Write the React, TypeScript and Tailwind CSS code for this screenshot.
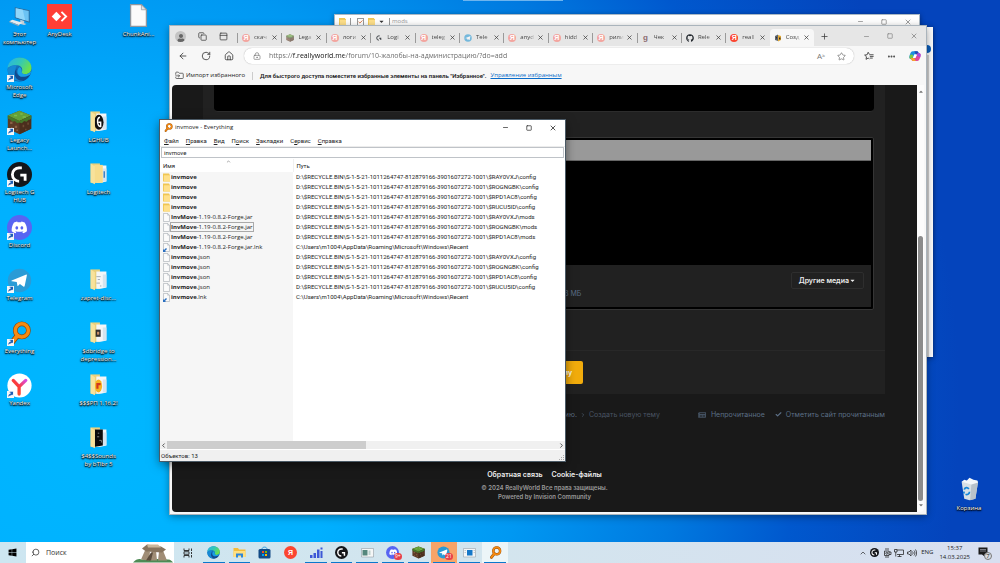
import type { ReactNode } from 'react'
import {
  ArrowLeft, RotateCw, House, LockKeyhole, Star, Ellipsis, Plus, X, Minus, Square, Search, ChevronUp,
  ChevronLeft, ChevronRight, Check, PanelTop, FolderInput, Copy,
} from 'lucide-react'
import { FaDiscord, FaGithub, FaWindows, FaUser, FaCaretDown, FaNewspaper } from 'react-icons/fa'

/* ---------- logos ---------- */

const box = 'block h-full w-full'

const Shortcut = () => (
  <svg viewBox="0 0 10 10" className="absolute bottom-0 left-0 h-[7px] w-[7px]">
    <rect width="10" height="10" fill="#f4f6f8" />
    <path d="M2 8.6C1.8 5.6 3 4.2 5.2 4V2.2h-1.4V1H8.6v5L7.4 5 6 6C4 6 3 7 2 8.6Z" fill="#1d5fb4" />
  </svg>
)

const EdgeLogo = () => (
  <svg viewBox="0 0 48 48" className={box}>
    <defs>
      <linearGradient id="eg" x1="0" y1="0" x2="1" y2="0.5">
        <stop offset="0" stopColor="#27b3e8" /><stop offset=".55" stopColor="#35c9b3" /><stop offset="1" stopColor="#6be04c" />
      </linearGradient>
      <linearGradient id="eb" x1="0" y1="0" x2="0.6" y2="1">
        <stop offset="0" stopColor="#1a8fd8" /><stop offset="1" stopColor="#0f4f98" />
      </linearGradient>
    </defs>
    <circle cx="24" cy="24" r="23" fill="url(#eb)" />
    <path d="M1 22C2 9 12 1 24 1c13 0 23 9 23 20 0 8-6 12-12 12-5 0-8-2-7-4 3-4 1-12-8-13C11 15 3 18 1 22Z" fill="url(#eg)" />
    <path d="M16 27c-1 9 5 17 15 18-14 4-29-5-30-21 3-6 12-9 18-8-2 3-3 7-3 11Z" fill="#1688d4" />
    <path d="M19 22c-4 8 2 16 11 16 6 0 11-2 14-4-4 8-12 12-19 11-10-2-14-16-6-23Z" fill="#134a8c" />
    <path d="M24 19c4 2 5 7 4 10 0 3 4 4 7 4 4 0 9-2 12-6-1 3-2 6-3 7-5 3-10 4-14 4-9 0-14-11-6-19Z" fill="#1aa6ec" fillOpacity=".9" />
  </svg>
)

const MagnifierLogo = () => (
  <svg viewBox="0 0 32 32" className={box}>
    <g fill="none" stroke="#8b4708" strokeLinecap="round"><circle cx="19" cy="12" r="8.4" strokeWidth="6" /><path d="M13 19 6 28" strokeWidth="7" /></g>
    <g fill="none" stroke="#f58a12" strokeLinecap="round"><circle cx="19" cy="12" r="8.4" strokeWidth="4.4" /><path d="M13 19 6 28" strokeWidth="5" /></g>
  </svg>
)

const GrassBlock = () => (
  <svg viewBox="0 0 32 32" className={box}>
    <path d="M16 1 31 7v17l-15 7L1 24V7Z" fill="#5c3b26" />
    <path d="M16 1 31 7l-15 7L1 7Z" fill="#63a03a" />
    <path d="M16 14 31 7v17l-15 7Z" fill="#4a2e1d" />
    <path d="m1 7 15 7 15-7v4l-3 2v-1l-3 3-3-1-3 3-3-1-3 1-3-3-3 1-3-3-3-1Z" fill="#44782a" />
    <path d="M4 15h3v3H4zM10 20h3v3h-3zM5 22h2v2H5zM12 25h2v2h-2z" fill="#8a6247" />
    <path d="M20 19h2v3h-2zM26 16h2v3h-2zM23 24h2v2h-2z" fill="#6d4a33" />
    <path d="M9 6h4v2H9zM17 4h3v2h-3zM20 8h4v2h-4z" fill="#7dbb4e" />
  </svg>
)

const GLogo = ({ plain = false }: { plain?: boolean }) => (
  <svg viewBox="0 0 32 32" className={box}>
    {!plain && <circle cx="16" cy="16" r="16" fill="#14161a" />}
    <path d="M15.5 7.5a8.6 8.6 0 0 0 0 17.2" fill="none" stroke={plain ? '#30343a' : '#fff'} strokeWidth="3.6" />
    <path d="M17 15h8v9h-3.6v-5.5H17Z" fill={plain ? '#30343a' : '#fff'} />
    <path d="M15 5.7h4v3.6h-4z" fill={plain ? '#30343a' : '#fff'} />
  </svg>
)

const DiscordLogo = () => (
  <span className="flex h-full w-full items-center justify-center rounded-full bg-[#5865f2] text-white">
    <FaDiscord className="h-2/3 w-2/3" />
  </span>
)

const TelegramLogo = () => (
  <svg viewBox="0 0 32 32" className={box}>
    <circle cx="16" cy="16" r="15" fill="#2a9bd6" />
    <path d="M6 16 24 8.5c1-.4 1.6.2 1.4 1.2L22.6 23c-.2 1-.9 1.2-1.7.7L16.5 20.5l-2.2 2.2c-.6.5-.9.3-1-.4l-.8-4.3L6.400 17c-.8-.2-.9-.7-.4-1Z" fill="#fff" />
  </svg>
)

const YandexBrowserLogo = () => (
  <svg viewBox="0 0 32 32" className={box}>
    <defs>
      <linearGradient id="yb" x1="0" y1="1" x2="1" y2="0">
        <stop offset="0" stopColor="#ff5a1f" /><stop offset=".5" stopColor="#fb3b3b" /><stop offset="1" stopColor="#d94be0" />
      </linearGradient>
    </defs>
    <circle cx="16" cy="16" r="15.5" fill="#fff" />
    <path d="M8 9.5 15.5 17.5 24 9.5M15.5 17.5V27" fill="none" stroke="url(#yb)" strokeWidth="4.2" strokeLinecap="round" />
  </svg>
)

const YaLogo = ({ faded = false }: { faded?: boolean }) => (
  <span className={`flex h-full w-full items-center justify-center rounded-full font-['Liberation_Sans',sans-serif] text-[7px] leading-none font-bold text-white ${faded ? 'bg-[#f3a59f]' : 'bg-[#fb4530]'}`}>
    Я
  </span>
)

const AnyDeskLogo = () => (
  <svg viewBox="0 0 32 32" className={box}>
    <rect width="32" height="32" fill="#ff3e36" />
    <path d="m12 10 6 6-6 6-6-6Z" fill="#fff" />
    <path d="m18.5 10 6 6-6 6" fill="none" stroke="#fff" strokeWidth="2.4" />
  </svg>
)

const PcLogo = () => (
  <svg viewBox="0 0 32 32" className={box}>
    <path d="m10 4 19 4v16L10 18Z" fill="#2e6d9e" />
    <path d="m11.2 5.500 16.600 3.500v13.400L11.200 17Z" fill="#6cc3f4" />
    <path d="m11.2 5.500 9 1.900 3 13.500-12-3.900Z" fill="#90d6fa" />
    <path d="m17 20 5 1.600v3l3 1-3 1.400-7-2 2-1.200Z" fill="#c4ccd4" />
    <path d="m3 22 4-2 13 4-5 3Z" fill="#e6eaee" />
    <path d="m3 22 12 5v1.400L3 23.400Z" fill="#9ba7b2" />
  </svg>
)

const FileLogo = () => (
  <svg viewBox="0 0 26 32" className={box}>
    <path d="M2 1h15l7 7v23H2Z" fill="#fbfbfb" stroke="#8f979f" strokeWidth="1.800" />
    <path d="M17 1v7h7Z" fill="#dfe3e6" stroke="#8f979f" />
  </svg>
)

const FolderLogo = ({ children }: { children?: ReactNode }) => (
  <svg viewBox="0 0 26 32" className={box}>
    <path d="M2 2h13v27H2Z" fill="#ead07c" />
    <path d="M10 5h14v22l-8 2h-6Z" fill="#f3f6f8" />
    <path d="M19 9h5v18h-5z" fill="#d4e4ef" />
    {children}
    <path d="M2 2 8 6v25l-6-3Z" fill="#f8e29b" />
  </svg>
)

const SmallFolder = () => (
  <svg viewBox="0 0 8 9" className={box}>
    <path d="M0 0h7v1h1v8H0Z" fill="#f0c653" /><path d="M1 2h7v7H1Z" fill="#ffe08a" />
  </svg>
)

const BinLogo = () => (
  <svg viewBox="0 0 32 36" className={box}>
    <path d="M4 7h25l-4 26-9 2-8-2Z" fill="#d9e0e5" />
    <path d="m19 9 10-2-4 26-8 2Z" fill="#b8c2ca" />
    <path d="m4 7 4-3 4 1 4-4 6 3 6 1 1 3-10 3Z" fill="#f5f8fa" />
    <g fill="none" stroke="#1686d9" strokeWidth="2.6"><path d="M8 19c1-4 5-4 7-1M16 22c0 4-4 5-6 4M8 25l-1-3" /></g>
  </svg>
)

const CopilotLogo = () => (
  <svg viewBox="0 0 32 32" className={box}>
    <path d="M10 3h11c4 0 4 5 6 8H16c-4 0-5 13-8 13-8 0-8-5-6-11S6 3 10 3Z" fill="#1a8fe0" />
    <path d="M21 3c4 0 4 5 6 8h-9l-4-8Z" fill="#2448b8" />
    <path d="M2 16c2-6 6-4 9-2l-2 11c-7 0-9-3-7-9Z" fill="#7ac943" />
    <path d="M22 29H11c-4 0-4-5-6-8h11c4 0 5-13 8-13 8 0 8 5 6 11s-4 10-8 10Z" fill="#e0499a" />
    <path d="M11 29c-4 0-4-5-6-8h9l4 8Z" fill="#f7a32d" />
    <path d="M24 8c8 0 8 5 6 11l-9-4Z" fill="#a34ee0" />
    <path d="m14 12 6 1-3 8-5-1Z" fill="#fff" />
  </svg>
)

/* ---------- desktop ---------- */

type DeskItem = { col: number; row: number; label: string; icon: ReactNode; link?: boolean; narrow?: boolean }

const desk: DeskItem[] = [
  { col: 0, row: 0, label: 'Этот компьютер', icon: <PcLogo /> },
  { col: 1, row: 0, label: 'AnyDesk', icon: <AnyDeskLogo /> },
  { col: 3, row: 0, label: 'ChunkAni...', icon: <FileLogo />, narrow: true },
  { col: 0, row: 1, label: 'Microsoft Edge', icon: <EdgeLogo />, link: true },
  { col: 0, row: 2, label: 'Legacy Launch...', icon: <GrassBlock />, link: true },
  { col: 2, row: 2, label: 'LGHUB', icon: <FolderLogo><ellipse cx="13.500" cy="17" rx="6.500" ry="10.500" fill="#111" /><path d="M15 10c-5 1-4 13 1 13v-6h-3" fill="none" stroke="#fff" strokeWidth="2" /></FolderLogo>, narrow: true },
  { col: 0, row: 3, label: 'Logitech G HUB', icon: <GLogo />, link: true },
  { col: 2, row: 3, label: 'Logitech', icon: <FolderLogo><path d="M7 4h12v25H7z" fill="#f6dc8c" /><path d="M20 13h2v9h-2z" fill="#3a7fc4" /></FolderLogo>, narrow: true },
  { col: 0, row: 4, label: 'Discord', icon: <DiscordLogo />, link: true },
  { col: 0, row: 5, label: 'Telegram', icon: <TelegramLogo />, link: true },
  { col: 2, row: 5, label: 'zapret-disc...', icon: <FolderLogo><path d="M10 12h6M12 16h3M10 21h5M15 25h2" stroke="#8c959d" /></FolderLogo>, narrow: true },
  { col: 0, row: 6, label: 'Everything', icon: <MagnifierLogo />, link: true },
  { col: 2, row: 6, label: '$dbridge to depression...', icon: <FolderLogo><path d="M9 12h7v10H9z" fill="#33302e" /><path d="M11 15h3v4h-3z" fill="#c98f6a" /></FolderLogo>, narrow: true },
  { col: 0, row: 7, label: 'Yandex', icon: <YandexBrowserLogo />, link: true },
  { col: 2, row: 7, label: '$$$РП 1.16.2!', icon: <FolderLogo><ellipse cx="13" cy="18" rx="5" ry="9" fill="#f5b321" /><path d="M10 14h6v3h-3v5h-3z" fill="#d2351f" /></FolderLogo>, narrow: true },
  { col: 2, row: 8, label: '$4$$Sounds by bTlbr 5', icon: <FolderLogo><path d="M8 5h11v22l-11 2z" fill="#0b0b0b" /><path d="M12 10h2M11 15h3M14 20h3v3" stroke="#aaa" /></FolderLogo>, narrow: true },
]

const labelText = "text-center text-[6px] leading-[8px] text-white [text-shadow:0_0_1px_#000,0_1px_1px_#000,0_1px_2px_#000]"

const DeskIcon = ({ item }: { item: DeskItem }) => (
  <button
    type="button"
    className="absolute flex w-[39px] flex-col items-center gap-px"
    style={{ left: Math.round(item.col * 39.5), top: Math.round(4 + item.row * 52.75) }}
  >
    <span className="relative block h-[25px] w-[25px]">
      <span className={item.narrow ? 'mx-auto block h-[23px] w-[19px]' : 'block h-full w-full'}>{item.icon}</span>
      {item.link && <Shortcut />}
    </span>
    <span className={labelText}>{item.label}</span>
  </button>
)

const Caption = ({ color }: { color: string }) => (
  <span className={`flex items-center gap-[17px] ${color}`}>
    <button type="button" aria-label="Свернуть"><Minus size={7} strokeWidth={2.5} /></button>
    <button type="button" aria-label="Развернуть"><Square size={6} strokeWidth={3} /></button>
    <button type="button" aria-label="Закрыть"><X size={8} strokeWidth={2.5} /></button>
  </span>
)

/* ---------- browser ---------- */

const tabs: { title: string; icon: ReactNode; active?: boolean; faded?: boolean }[] = [
  { title: 'скач', icon: <YaLogo faded /> },
  { title: 'Lega', icon: <GrassBlock />, faded: true },
  { title: 'логи', icon: <YaLogo faded /> },
  { title: 'Logi', icon: <GLogo plain /> },
  { title: 'teleg', icon: <YaLogo faded /> },
  { title: 'Tele', icon: <TelegramLogo />, faded: true },
  { title: 'anyd', icon: <YaLogo faded /> },
  { title: 'hidd', icon: <YaLogo faded /> },
  { title: 'рили', icon: <YaLogo faded /> },
  { title: 'Чек', icon: <span className="block text-center font-['Liberation_Sans',sans-serif] text-[8px] leading-[7px] font-bold text-[#8a6a70] underline decoration-[#d56a6a]">g</span> },
  { title: 'Rele', icon: <FaGithub className="h-full w-full text-[#24292f]" /> },
  { title: 'reall', icon: <YaLogo /> },
  { title: 'Созд', icon: <svg viewBox="0 0 16 16" className={box}><path d="M2 4 8 1v13l-6-2Z" fill="#5a6470" /><path d="m8 2 6 2v8l-6 3Z" fill="#e5ab35" /><path d="M4 6h2v3H4zM10 7h3v4h-3z" fill="#3b2d22" /></svg>, active: true },
]

const Browser = () => (
  <section className="absolute top-[26px] right-[7.4%] bottom-[28px] left-[17%] flex flex-col bg-[#f7f7f7] shadow-[0_2px_8px_rgba(0,0,0,0.45)] outline outline-[#aab4bc]">
    <header className="flex h-5 shrink-0 items-center bg-[#e6e6e6] pr-2 text-[#3b3b3b]">
      <div className="flex w-[67px] items-center gap-3 pl-[5px]">
        <span className="flex h-[11px] w-[11px] items-end justify-center overflow-hidden rounded-full bg-[#c4c4c4] text-[#666]"><FaUser size={8} /></span>
        <Copy size={9} /><PanelTop size={9} />
      </div>
      <nav className="flex h-full w-[577px] items-end">
        {tabs.map((t) => (
          <button type="button" key={t.title} className={`flex h-[17px] min-w-0 flex-1 items-center ${t.active ? 'rounded-t bg-[#f7f7f7]' : ''}`}>
            {!t.active && <span className="h-[10px] w-px bg-[#9a9a9a]" />}
            <span className={`ml-1 h-2 w-2 shrink-0 ${t.faded ? 'opacity-60' : ''}`}>{t.icon}</span>
            <span className="ml-1 w-[15px] text-left text-[6px] leading-[9px] whitespace-nowrap text-[#444] [mask-image:linear-gradient(to_right,#000_60%,transparent)]">{t.title}</span>
            <X size={7} strokeWidth={2.5} className="ml-[2px] shrink-0" />
          </button>
        ))}
      </nav>
      <button type="button" aria-label="Новая вкладка" className="ml-[6px]"><Plus size={9} /></button>
      <span className="ml-auto"><Caption color="text-[#8a8a8a]" /></span>
    </header>
    <div className="flex h-5 shrink-0 items-center pr-[5px] pl-2 text-[#3b3b3b]">
      <div className="flex w-[66px] items-center gap-[13px]">
        <ArrowLeft size={10} /><RotateCw size={10} /><House size={10} />
      </div>
      <div className="flex h-4 min-w-0 flex-1 items-center rounded-full bg-white pr-2 pl-[9px] shadow-[0_0_1px_#999]">
        <LockKeyhole size={8} className="text-[#777]" />
        <input
          aria-label="Адресная строка"
          defaultValue="https://f.reallyworld.me/forum/10-жалобы-на-администрацию/?do=add"
          className="ml-2 min-w-0 flex-1 bg-[linear-gradient(to_right,#666_24px,#111_24px,#111_75px,#666_75px)] bg-clip-text text-[7px] leading-[10px] text-transparent outline-none"
        />
        <span className="text-[8px] leading-[10px] text-[#777]">A<sup className="text-[5px]">ঌ</sup></span>
        <Star size={9} className="ml-3 text-[#777]" />
      </div>
      <div className="flex items-center gap-[13px] pl-[10px]">
        <svg viewBox="0 0 24 24" className="h-[10px] w-[10px]" fill="none" stroke="#333" strokeWidth="2"><path d="m13 8-3-5-2.5 6-6 .8 4.500 4-1.200 6.200L10 17l3 2M13 9h10M14 13h9M14 17h7" /></svg>
        <Ellipsis size={9} strokeWidth={3} />
        <span className="h-3 w-3"><CopilotLogo /></span>
      </div>
    </div>
    <div className="flex h-[19px] shrink-0 items-center pl-[5px] text-[6px] leading-[9px] text-[#222]">
      <FolderInput size={9} className="text-[#444]" />
      <a href="#import" className="ml-[2px]">Импорт избранного</a>
      <span className="mx-[7px] h-2 w-px bg-[#ccc]" />
      <span className="font-['Roboto',sans-serif] font-semibold">Для быстрого доступа поместите избранные элементы на панель &quot;Избранное&quot;.</span>
      <a href="#manage" className="ml-1 text-[#0a6cc9] underline">Управление избранным</a>
    </div>
    <div className="flex min-h-0 flex-1 pr-[2px] pb-[2px] pl-[2px]">
      <Forum />
      <div className="flex w-[7px] flex-col items-center rounded-br bg-[#fcfcfc] pt-1 pb-1 text-[#777]">
        <FaCaretDown size={6} className="shrink-0 rotate-180" />
        <span className="flex-[141]" />
        <span className="w-[5px] flex-[265] rounded-full bg-[#8b8b8b]" />
        <FaCaretDown size={6} className="mt-px shrink-0" />
      </div>
    </div>
  </section>
)

const Forum = () => (
  <main className="flex min-w-0 flex-1 flex-col overflow-hidden rounded-l bg-[#191919] font-['Inter',sans-serif] text-[7px] leading-[9px] text-[#5c6f86]">
    <div className="mr-8 ml-[31px] bg-[#212121]">
      <div className="mx-[11px] h-[27px] rounded-b-sm border-b border-[#2c2c2c] bg-black" />
      <div className="mx-[11px] mt-[25px] rounded-xs border border-[#353535] bg-black p-[2px]">
        <div className="h-[21px] border-b border-[#666] bg-[#999]" />
        <div className="h-[104px]" />
        <div className="flex h-[42px] justify-between bg-[#212121] px-[7px] pt-[7px]">
          <span className="flex-1 pt-[17px] pl-[331px]">1,93 МБ</span>
          <button type="button" className="flex h-[17px] items-center rounded-xs border border-[#2e2e2e] px-[7px] font-semibold text-[#ececec]">Другие медиа<FaCaretDown size={7} /></button>
        </div>
      </div>
      <div className="mt-[40px] flex h-[44px] justify-center border-t border-[#282828] pt-[10px]">
        <button type="button" className="h-[23px] rounded-xs bg-[#f2ac0c] px-[11px] font-semibold text-white">Отправить тему</button>
      </div>
    </div>
    <div className="mt-4 mr-8 ml-[31px] flex items-center justify-end">
      <a href="#complaints">Жалобы на администрацию.</a>
      <ChevronRight size={6} className="mx-[3px]" />
      <span className="text-[#4a5564]">Создать новую тему</span>
      <a href="#unread" className="ml-[38px] flex items-center gap-[5px]"><FaNewspaper size={8} className="text-[#445262]" />Непрочитанное</a>
      <a href="#read" className="ml-[10px] flex items-center gap-1"><Check size={7} strokeWidth={4} />Отметить сайт прочитанным</a>
    </div>
    <footer className="mt-[51px] text-center">
      <div className="flex justify-center gap-[9px] font-semibold text-[#eee]">
        <a href="#contact">Обратная связь</a>
        <a href="#cookies">Cookie-файлы</a>
      </div>
      <p className="mt-1 text-[6px] font-semibold text-[#999]">© 2024 ReallyWorld Все права защищены.</p>
      <p className="text-[6px] font-semibold text-[#999]">Powered by Invision Community</p>
    </footer>
  </main>
)

/* ---------- Everything ---------- */

const RB = 'D:\\$RECYCLE.BIN\\S-1-5-21-1011264747-812879166-3901607272-1001\\'
const RECENT = 'C:\\Users\\m1004\\AppData\\Roaming\\Microsoft\\Windows\\Recent'

const rows: { kind: 'dir' | 'file' | 'lnk'; hit: string; rest: string; path: string; focus?: boolean }[] = [
  { kind: 'dir', hit: 'invmove', rest: '', path: RB + '$RAY0VXJ\\config' },
  { kind: 'dir', hit: 'invmove', rest: '', path: RB + '$ROGNGBK\\config' },
  { kind: 'dir', hit: 'invmove', rest: '', path: RB + '$RPD1AC8\\config' },
  { kind: 'dir', hit: 'invmove', rest: '', path: RB + '$RUCU5ID\\config' },
  { kind: 'file', hit: 'InvMove', rest: '-1.19-0.8.2-Forge.jar', path: RB + '$RAY0VXJ\\mods' },
  { kind: 'file', hit: 'InvMove', rest: '-1.19-0.8.2-Forge.jar', path: RB + '$ROGNGBK\\mods', focus: true },
  { kind: 'file', hit: 'InvMove', rest: '-1.19-0.8.2-Forge.jar', path: RB + '$RPD1AC8\\mods' },
  { kind: 'lnk', hit: 'InvMove', rest: '-1.19-0.8.2-Forge.jar.lnk', path: RECENT },
  { kind: 'file', hit: 'invmove', rest: '.json', path: RB + '$RAY0VXJ\\config' },
  { kind: 'file', hit: 'invmove', rest: '.json', path: RB + '$ROGNGBK\\config' },
  { kind: 'file', hit: 'invmove', rest: '.json', path: RB + '$RPD1AC8\\config' },
  { kind: 'file', hit: 'invmove', rest: '.json', path: RB + '$RUCU5ID\\config' },
  { kind: 'lnk', hit: 'invmove', rest: '.lnk', path: RECENT },
]

const menu = [
  ['', 'Ф', 'айл'], ['', 'П', 'равка'], ['', 'В', 'ид'], ['П', 'о', 'иск'],
  ['', 'З', 'акладки'], ['С', 'е', 'рвис'], ['', 'С', 'правка'],
]

const Everything = () => (
  <section className="absolute top-[120px] bottom-[81px] left-[16%] flex w-[40.5%] flex-col bg-white font-['Roboto','Open_Sans',sans-serif] text-[6px] leading-[9px] text-[#222] shadow-[0_3px_10px_rgba(0,0,0,0.55)] outline outline-[#4b5a66]">
    <header className="flex h-[15px] shrink-0 items-center pr-2 pl-1 font-['Open_Sans',sans-serif]">
      <span className="h-[9px] w-[9px]"><MagnifierLogo /></span>
      <h1 className="ml-[2px]">invmove - Everything</h1>
      <span className="ml-auto"><Caption color="text-[#333]" /></span>
    </header>
    <nav className="flex h-[12px] shrink-0 items-center gap-[7px] border-b border-[#ececec] pl-1">
      {menu.map(([a, u, b]) => (
        <button type="button" key={a + u + b}>{a}<u>{u}</u>{b}</button>
      ))}
    </nav>
    <input aria-label="Поиск" defaultValue="invmove" className="mx-px mb-px h-[11px] shrink-0 border border-[#bfc3c8] px-[2px] outline-none" />
    <div className="min-h-0 flex-1 overflow-hidden bg-[linear-gradient(to_right,#f6f6f6_133px,#fff_133px)]">
      <table className="w-full table-fixed border-collapse">
        <thead>
          <tr className="h-[13px] bg-white">
            <th className="relative w-[133px] border-r border-[#f0f0f0] p-0 pl-[3px] text-left font-normal">
              Имя
              <ChevronUp size={5} className="absolute top-0 left-1/2 text-[#333]" />
            </th>
            <th className="p-0 pl-[3px] text-left font-normal">Путь</th>
          </tr>
        </thead>
        <tbody>
          {rows.map((r, i) => (
            <tr key={i} className="h-[10px]">
              <td className="p-0 font-['Open_Sans',sans-serif]">
                <span className="flex h-[10px] items-center pl-[3px] whitespace-nowrap">
                  <span className="relative h-[9px] w-[7px] shrink-0">
                    {r.kind === 'dir' ? <SmallFolder /> : <FileLogo />}
                    {r.kind === 'lnk' && <svg viewBox="0 0 4 4" className="absolute bottom-0 left-0 h-1 w-1"><path d="M0 4 0 1 1 2 3 0 4 1 2 3 3 4Z" fill="#2a6fc0" /></svg>}
                  </span>
                  <span className={`h-[10px] border pr-px leading-[8px] ${r.focus ? 'border-[#aaa]' : 'border-transparent'}`}><b>{r.hit}</b>{r.rest}</span>
                </span>
              </td>
              <td className="h-[10px] p-0 pl-[3px] leading-[10px] whitespace-nowrap">{r.path}</td>
            </tr>
          ))}
        </tbody>
      </table>
    </div>
    <div className="flex h-2 shrink-0 items-center bg-[#f0f0f0] text-[#444]">
      <ChevronLeft size={7} strokeWidth={3} className="shrink-0" />
      <span className="flex h-full flex-1"><span className="h-full w-[51%] bg-[#cdcdcd]" /></span>
      <ChevronRight size={7} strokeWidth={3} className="shrink-0" />
    </div>
    <footer className="mt-px flex h-[11px] shrink-0 items-end justify-between bg-[#f0f0f0] pl-px leading-[11px]">
      Объектов: 13
      <svg viewBox="0 0 6 6" className="h-[6px] w-[6px]" fill="#aaa"><path d="M4 0h1v1H4zM2 2h1v1H2zM4 2h1v1H4zM0 4h1v1H0zM2 4h1v1H2zM4 4h1v1H4z" /></svg>
    </footer>
  </section>
)

/* ---------- taskbar ---------- */

const apps: { name: string; icon: ReactNode; open?: boolean; tone?: string; badge?: string }[] = [
  { name: 'Edge', icon: <EdgeLogo />, open: true },
  { name: 'Проводник', icon: <svg viewBox="0 0 26 24" className={box}><path d="M1 3h9l2 3h13v15H1Z" fill="#f5bd3a" /><path d="M1 9h24v12H1Z" fill="#ffdf82" /><path d="M6 14h14v8h-4v-4h-6v4H6Z" fill="#2f86d8" /></svg>, open: true },
  { name: 'Store', icon: <svg viewBox="0 0 26 26" className={box}><path d="M8 6c0-5 10-5 10 0" fill="none" stroke="#2a9be0" strokeWidth="2" /><rect x="1" y="6" width="24" height="19" rx="3" fill="#124b86" /><path d="M8 10h4v4H8z" fill="#f25022" /><path d="M14 10h4v4h-4z" fill="#7fba00" /><path d="M8 16h4v4H8z" fill="#00a4ef" /><path d="M14 16h4v4h-4z" fill="#ffb900" /></svg> },
  { name: 'Яндекс', icon: <YaLogo /> },
  { name: 'Монитор', icon: <svg viewBox="0 0 26 24" className={box} fill="#3d58d6"><path d="M0 17h5v6H0zM7 13h5v10H7zM14 6h5v17h-5zM21 9h4v14h-4zM21 2h4v4h-4z" /></svg>, open: true },
  { name: 'G HUB', icon: <GLogo />, open: true },
  { name: 'Журнал', icon: <svg viewBox="0 0 26 24" className={box}><path d="M1 4h24v17H1Z" fill="#f5f7f7" stroke="#848e94" /><path d="M3 7h10v11H3Z" fill="#55877c" /><path d="M15 8h4v9h-4z" fill="#bcd0cc" /></svg>, open: true },
  { name: 'Discord', icon: <DiscordLogo />, open: true, badge: '9+' },
  { name: 'Minecraft', icon: <GrassBlock />, open: true },
  { name: 'Telegram', icon: <TelegramLogo />, open: true, tone: 'bg-[#f8a468]', badge: '21' },
  { name: 'Просмотр', icon: <svg viewBox="0 0 26 24" className={box}><path d="M1 4h24v17H1Z" fill="#f4f6f8" stroke="#8a949c" /><path d="M8 7h11v11H8Z" fill="#1678c8" /><path d="M3 8h3M3 12h3M21 8h3M21 12h3" stroke="#98a4ae" /></svg>, open: true },
  { name: 'Everything', icon: <MagnifierLogo />, open: true, tone: 'bg-[#ecf5f8]' },
]

const Taskbar = () => (
  <footer className="flex h-[21px] shrink-0 items-stretch bg-[linear-gradient(to_right,#cde6f1,#d3e5ee_50%,#d8dff0)] text-[#222]">
    <button type="button" aria-label="Пуск" className="flex w-6 items-center justify-center"><FaWindows size={9} className="text-black" /></button>
    <label className="ml-[2px] flex w-[148px] items-center overflow-hidden bg-white pl-[5px]">
      <Search size={9} className="-scale-x-100 text-[#333]" />
      <input aria-label="Поиск в Windows" placeholder="Поиск" className="ml-[6px] h-[13px] w-[87px] text-[7px] leading-[13px] outline-none placeholder:text-[#333]" />
      <svg viewBox="0 0 40 20" className="h-[21px] w-10 shrink-0">
        <path d="M0 20c3-4 7-4 9-3l6-1 20 1c3 0 4 2 5 3Z" fill="#4e8a55" />
        <path d="m8 17 4-9 5 1-1 9ZM17 18l2-10h4l1 10ZM25 18l1-9 4-1 4 10Z" fill="#a08d76" />
        <path d="m9 6 5-4 14 2 5 3-4 3-16-1Z" fill="#87745f" /><path d="m14 2 11 0 3 3-13 0Z" fill="#c9b79d" />
        <path d="M13 18h5l2-8h-2Z" fill="#5c4c3d" />
      </svg>
    </label>
    <button type="button" aria-label="Представление задач" className="flex w-[27px] items-center justify-center">
      <svg viewBox="0 0 20 20" className="h-[10px] w-[10px]" fill="none" stroke="#222" strokeWidth="1.8"><path d="M2 1v4h10V1M2 19v-4h10v4M2 7.5h10v5H2ZM17 1v5M17 8v4M17 14v5" /></svg>
    </button>
    <nav className="flex w-[307px]">
      {apps.map((a) => (
        <button type="button" key={a.name} aria-label={a.name} className={`relative flex flex-1 items-center justify-center ${a.tone ?? ''}`}>
          <span className="h-[13px] w-[13px]">{a.icon}</span>
          {a.badge && <span className="absolute right-1 bottom-[3px] rounded-full bg-[#e8404a] px-px text-[5px] leading-[7px] text-white">{a.badge}</span>}
          {a.open && <span className="absolute inset-x-[2px] bottom-0 h-px bg-[#0a78cc]" />}
        </button>
      ))}
    </nav>
    <div className="ml-auto flex items-center pr-2 text-[6px]">
      <ChevronUp size={8} className="mr-[3px]" />
      <span className="h-[9px] w-[9px]"><GLogo /></span>
      <svg viewBox="0 0 18 20" className="ml-1 h-[10px] w-[9px]" fill="none" stroke="#222" strokeWidth="1.5"><path d="M4 2h8M4 18h8M3 6h9v9H3ZM12 8h4v5h-4" /><circle cx="7.5" cy="10.5" r="2" /></svg>
      <svg viewBox="0 0 20 20" className="ml-[2px] h-[10px] w-[10px]" fill="none" stroke="#222" strokeWidth="1.5"><path d="M6 4h13v9H6M11 13v4M7 17h8M1 3h5v5H1ZM3.5 8v9" /></svg>
      <svg viewBox="0 0 20 20" className="ml-[3px] h-[10px] w-[10px]" fill="none" stroke="#222" strokeWidth="1.5"><path d="M1 8h3l4-4v12l-4-4H1ZM11 7c1.500 2 1.500 4 0 6M14 5c2.500 3 2.500 7 0 10M17 3c3 4 3 10 0 14" /></svg>
      <span className="ml-1">ENG</span>
      <time className="ml-[6px] text-center leading-[9px]">15:37<br />14.03.2025</time>
      <span className="relative ml-2 h-[11px] w-[14px]">
        <svg viewBox="0 0 20 20" className="h-[10px] w-[10px]"><path d="M1 1h18v14h-6v4l-5-4H1Z" fill="#1b1b1b" /><path d="M4 5h12M4 8h12" stroke="#d8dff0" /></svg>
        <span className="absolute right-0 -bottom-[2px] h-2 w-2 rounded-full border border-[#777] bg-[#d9dde4] text-center text-[6px] leading-[6px]">7</span>
      </span>
    </div>
  </footer>
)

export default function App() {
  return (
    <div className="flex h-screen flex-col overflow-hidden font-['Open_Sans','Noto_Sans',sans-serif]">
      <div className="relative flex-1 overflow-hidden bg-[radial-gradient(circle_at_10%_75%,#00b7ff_0,#00b0ff_250px,#0098f2_430px,#007ae0_580px,#0058ce_700px,#0444bc_860px)]">
        <div className="absolute top-0 left-[46.3%] h-px w-[10%] bg-[#6db4ee]" />
        {desk.map((d) => <DeskIcon key={d.label} item={d} />)}
        <button type="button" className="absolute right-[11px] bottom-[30px] flex w-10 flex-col items-center gap-[3px]">
          <span className="h-[24px] w-[21px]"><BinLogo /></span>
          <span className={labelText}>Корзина</span>
        </button>

        <section className="absolute top-[27px] right-[6.7%] h-[330px] w-1/2 bg-[#fafafa] shadow-[0_1px_5px_rgba(0,0,0,0.5)]">
          <span className="absolute top-[18px] right-[2px] h-2 w-2 rounded-full bg-[#0a5cb8]" />
          <span className="absolute top-[28px] right-1 bottom-0 w-[2px] bg-[#d0d0d0]" />
        </section>

        <section className="absolute top-[14px] right-[8%] left-[33.4%] h-[300px] border border-[#aab8c4] bg-white shadow-[0_1px_5px_rgba(0,0,0,0.4)]">
          <header className="flex h-[13px] items-center pr-[7px] pl-1 text-[6px] text-[#999]">
            <span className="h-2 w-[7px]"><SmallFolder /></span>
            <span className="ml-1 h-[7px] w-px bg-[#999]" />
            <span className="ml-[6px] flex h-2 w-[7px] border border-[#999]"><Check size={6} strokeWidth={4} className="text-[#d0602c]" /></span>
            <span className="ml-1 h-2 w-[7px]"><SmallFolder /></span>
            <FaCaretDown size={7} className="ml-[3px] text-[#333]" />
            <span className="mr-[2px] ml-1 h-[7px] w-px bg-[#999]" />
            <span>mods</span>
            <span className="ml-auto"><Caption color="text-[#8a8a8a]" /></span>
          </header>
        </section>

        <Browser />
        <Everything />
      </div>
      <Taskbar />
    </div>
  )
}
